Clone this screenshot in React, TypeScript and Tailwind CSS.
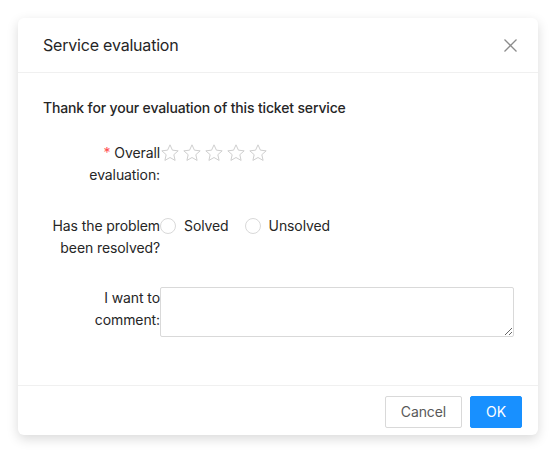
import React, { useState } from "react";

const font = { fontFamily: "Inter, 'Liberation Sans', sans-serif" };

const StarOutline = () => (
  <svg width="20" height="20" viewBox="0 0 24 24" className="block">
    <polygon
      points="12,2.2 14.9,8.6 21.8,9.4 16.6,14 18.1,20.9 12,17.4 5.9,20.9 7.4,14 2.2,9.4 9.1,8.6"
      fill="none"
      stroke="#cfcfcf"
      strokeWidth="1.2"
      strokeLinejoin="miter"
    />
  </svg>
);

const Radio = ({ label, checked, onClick }: { label: string; checked: boolean; onClick: () => void }) => (
  <label className="mr-2 flex cursor-pointer items-center leading-[22px]" onClick={onClick}>
    <span
      className={`flex h-4 w-4 items-center justify-center rounded-full border bg-white ${
        checked ? "border-[#1890ff]" : "border-[#d9d9d9]"
      }`}
    >
      {checked && <span className="h-2 w-2 rounded-full bg-[#1890ff]" />}
    </span>
    <span className="px-2">{label}</span>
  </label>
);

export default function App() {
  const [resolved, setResolved] = useState<"solved" | "unsolved" | null>(null);
  const [comment, setComment] = useState("");

  return (
    <div
      className="min-h-[453px] bg-white pl-[18px] pt-[18px] text-sm tracking-[-0.1px] text-[#262626]"
      style={font}
    >
      <div className="w-[520px] rounded-md bg-white shadow-[0_4px_12px_rgba(0,0,0,0.15)]">
        {/* Header */}
        <div className="flex items-center justify-between border-b border-[#f0f0f0] py-4 pl-[25px] pr-[21px]">
          <div className="text-base leading-[22px] tracking-[-0.2px] text-[#262626]">Service evaluation</div>
          <button className="flex h-[14px] w-[14px] items-center justify-center text-[#8c8c8c]">
            <svg width="13" height="13" viewBox="0 0 13 13">
              <path d="M0.5 0.5 L12.5 12.5 M12.5 0.5 L0.5 12.5" stroke="currentColor" strokeWidth="1.3" />
            </svg>
          </button>
        </div>

        {/* Body */}
        <div className="p-6">
          <div className="mb-[23px] pl-px font-medium leading-[22px] tracking-[-0.15px]">
            Thank for your evaluation of this ticket service
          </div>

          <div className="mb-[29px] flex">
            <div className="w-[118px] text-right leading-[22px]">
              <span className="mr-1 text-[#ff4d4f]">*</span>Overall
              <br />
              evaluation:
            </div>
            <div className="flex gap-[2px] pt-px">
              {[0, 1, 2, 3, 4].map((i) => (
                <StarOutline key={i} />
              ))}
            </div>
          </div>

          <div className="mb-[28px] flex">
            <div className="w-[118px] text-right leading-[22px]">
              Has the problem
              <br />
              been resolved?
            </div>
            <div className="flex h-[22px] items-center">
              <Radio label="Solved" checked={resolved === "solved"} onClick={() => setResolved("solved")} />
              <Radio label="Unsolved" checked={resolved === "unsolved"} onClick={() => setResolved("unsolved")} />
            </div>
          </div>

          <div className="flex">
            <div className="w-[118px] text-right leading-[22px]">
              I want to
              <br />
              comment:
            </div>
            <textarea
              value={comment}
              onChange={(e) => setComment(e.target.value)}
              className="h-[50px] flex-1 rounded-[2px] border border-[#d9d9d9] px-[11px] py-1 outline-none"
            />
          </div>
          <div className="h-6" />
        </div>

        {/* Footer */}
        <div className="flex justify-end gap-2 border-t border-[#f0f0f0] px-4 pb-[7px] pt-[10px]">
          <button className="h-8 rounded-[2px] border border-[#d9d9d9] bg-white px-[15px] text-[#595959]">Cancel</button>
          <button className="h-8 rounded-[2px] border border-[#1890ff] bg-[#1890ff] px-[15px] text-white">OK</button>
        </div>
      </div>
    </div>
  );
}
